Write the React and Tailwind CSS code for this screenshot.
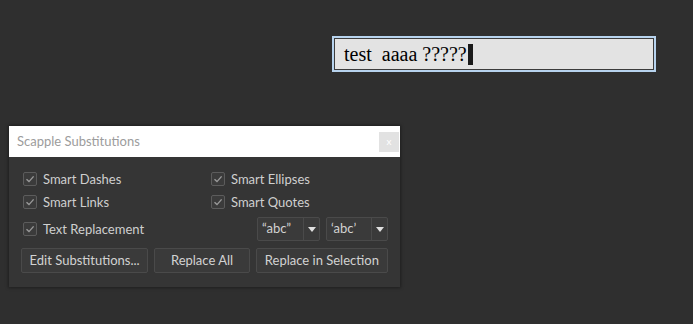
const font = { fontFamily: 'Lato, "Noto Sans", sans-serif' }

function Check({ label }) {
  return (
    <label className="flex items-center gap-[6px] text-[13px] leading-none text-[#cfcfcf]">
      <span className="flex h-[14px] w-[14px] items-center justify-center rounded-[2px] border border-[#5c5c5c] bg-[#3b3b3b]">
        <svg width="10" height="10" viewBox="0 0 10 10" fill="none">
          <path d="M1.5 5.2 L4 7.6 L8.6 2.4" stroke="#9a9a9a" strokeWidth="1.4" />
        </svg>
      </span>
      {label}
    </label>
  )
}

function Combo({ value, width }) {
  return (
    <div className={`flex h-[24px] ${width} rounded-[2px] border border-[#4a4a4a] bg-[#3a3a3a] text-[13px] text-[#d2d2d2]`}>
      <div className="flex flex-1 items-center pl-[4px]">{value}</div>
      <div className="flex w-[16px] items-center justify-center border-l border-[#4a4a4a]">
        <svg width="8" height="5" viewBox="0 0 8 5"><path d="M0 0 H8 L4 5 Z" fill="#e0e0e0" /></svg>
      </div>
    </div>
  )
}

function Btn({ children, width }) {
  return (
    <button className={`flex h-[25px] ${width} items-center justify-center rounded-[2px] border border-[#4a4a4a] bg-[#3a3a3a] text-[13px] text-[#d2d2d2]`}>
      {children}
    </button>
  )
}

export default function App() {
  return (
    <div className="relative h-[324px] w-[693px] overflow-hidden bg-[#2f2f2f]" style={font}>
      <div className="absolute left-[332px] top-[36px] h-[36px] w-[324px] border-2 border-[#b7d3ee] bg-[#e3e3e3]">
        <div className="flex h-full w-full items-center border border-[#3c3c3c] pl-[9px]">
          <span className="text-[20px] leading-none text-black" style={{ fontFamily: '"Liberation Serif", serif', whiteSpace: 'pre' }}>
            test  aaaa ?????
          </span>
          <span className="ml-[1px] h-[21px] w-[5px] bg-[#1a1a1a]" />
        </div>
      </div>

      <div className="absolute left-[9px] top-[126px] w-[391px] bg-[#353535] shadow-[0_0_3px_1px_rgba(0,0,0,0.35)]">
        <div className="flex h-[31px] items-center justify-between bg-white pl-[8px] pr-[1px]">
          <span className="text-[13px] text-[#9c9c9c]">Scapple Substitutions</span>
          <div className="flex h-[20px] w-[20px] items-center justify-center bg-[#e2e2e2] text-[10px] text-white">x</div>
        </div>
        <div className="px-[12px] pb-[14px] pt-[15px]">
          <div className="grid grid-cols-[188px_1fr] gap-y-[9px] pl-[2px]">
            <Check label="Smart Dashes" />
            <Check label="Smart Ellipses" />
            <Check label="Smart Links" />
            <Check label="Smart Quotes" />
          </div>
          <div className="mt-[8px] flex items-center justify-between pl-[2px]">
            <Check label="Text Replacement" />
            <div className="flex gap-[6px]">
              <Combo value="“abc”" width="w-[63px]" />
              <Combo value="‘abc’" width="w-[62px]" />
            </div>
          </div>
          <div className="mt-[7px] flex gap-[6px]">
            <Btn width="w-[128px]">Edit Substitutions...</Btn>
            <Btn width="w-[96px]">Replace All</Btn>
            <Btn width="w-[133px]">Replace in Selection</Btn>
          </div>
        </div>
      </div>
    </div>
  )
}
